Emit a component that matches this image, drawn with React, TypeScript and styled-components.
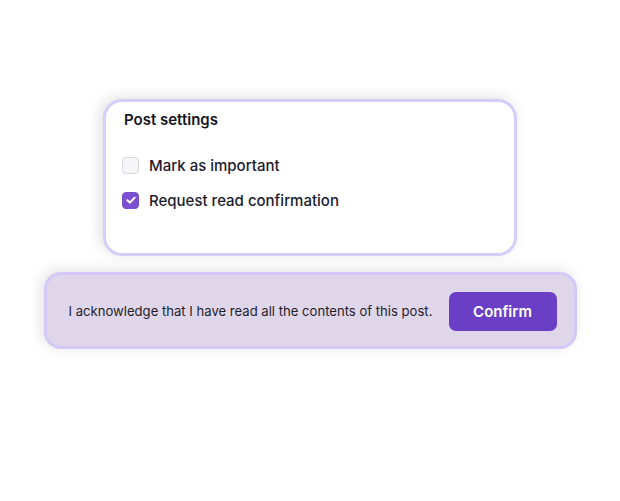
import { useState } from 'react';
import styled, { createGlobalStyle } from 'styled-components';

const GlobalStyle = createGlobalStyle`
  html, body {
    margin: 0;
    padding: 0;
    background: #ffffff;
  }
  body {
    font-family: Inter, 'Noto Sans', sans-serif;
    color: #1c1b2b;
    -webkit-font-smoothing: antialiased;
  }
`;

const Page = styled.div`
  width: 620px;
  height: 501px;
  padding-top: 99px;
  box-sizing: border-box;
  display: flex;
  flex-direction: column;
  align-items: center;
  gap: 16px;
`;

const SettingsCard = styled.section`
  width: 414px;
  height: 157px;
  box-sizing: border-box;
  padding: 8px 16px 0 16px;
  background: #ffffff;
  border: 3px solid #d6cdfa;
  border-radius: 19px;
  box-shadow: -3px -2px 14px rgba(0, 0, 0, 0.12);
  display: flex;
  flex-direction: column;
`;

const Title = styled.h2`
  margin: 0 0 0 2px;
  font-size: 15px;
  line-height: 20px;
  font-weight: 600;
  color: #15141f;
`;

const Options = styled.div`
  display: flex;
  flex-direction: column;
  gap: 11px;
  margin-top: 23px;
`;

const Option = styled.label`
  display: flex;
  align-items: center;
  gap: 10px;
  height: 24px;
  font-size: 15px;
  font-weight: 500;
  color: #1c1a2e;
  cursor: pointer;
`;

const Box = styled.span<{ $checked: boolean }>`
  width: 17px;
  height: 17px;
  box-sizing: border-box;
  border-radius: 4px;
  display: flex;
  align-items: center;
  justify-content: center;
  background: ${(p) => (p.$checked ? '#7a4fd0' : '#f6f6f8')};
  border: 1px solid ${(p) => (p.$checked ? '#7a4fd0' : '#d7d7de')};
`;

const ConfirmBar = styled.section`
  width: 533px;
  height: 77px;
  box-sizing: border-box;
  padding: 0 17px 0 22px;
  background: #dfd6e9;
  border: 3px solid #d3c8f8;
  border-radius: 17px;
  box-shadow: -3px -2px 14px rgba(0, 0, 0, 0.12);
  display: flex;
  align-items: center;
  justify-content: space-between;
`;

const AckText = styled.p`
  margin: 0;
  font-size: 13.1px;
  color: #1f1d2b;
`;

const ConfirmButton = styled.button`
  width: 108px;
  height: 39px;
  margin-top: 2px;
  border: none;
  border-radius: 7px;
  background: #6a3fc6;
  color: #ffffff;
  font-family: Inter, 'Noto Sans', sans-serif;
  font-size: 15px;
  font-weight: 600;
  cursor: pointer;
`;

function Checkbox({ checked }: { checked: boolean }) {
  return (
    <Box $checked={checked}>
      {checked && (
        <svg width='12' height='12' viewBox='0 0 12 12' fill='none'>
          <path d='M2.3 6.2 L4.9 8.6 L9.7 3.6' stroke='#fff' strokeWidth='2' strokeLinecap='round' strokeLinejoin='round' />
        </svg>
      )}
    </Box>
  );
}

function App() {
  const [important, setImportant] = useState(false);
  const [readConfirm, setReadConfirm] = useState(true);

  return (
    <>
      <GlobalStyle />
      <Page>
        <SettingsCard>
          <Title>Post settings</Title>
          <Options>
            <Option onClick={() => setImportant(!important)}>
              <Checkbox checked={important} />
              Mark as important
            </Option>
            <Option onClick={() => setReadConfirm(!readConfirm)}>
              <Checkbox checked={readConfirm} />
              Request read confirmation
            </Option>
          </Options>
        </SettingsCard>

        <ConfirmBar>
          <AckText>I acknowledge that I have read all the contents of this post.</AckText>
          <ConfirmButton>Confirm</ConfirmButton>
        </ConfirmBar>
      </Page>
    </>
  );
}

export default App;
